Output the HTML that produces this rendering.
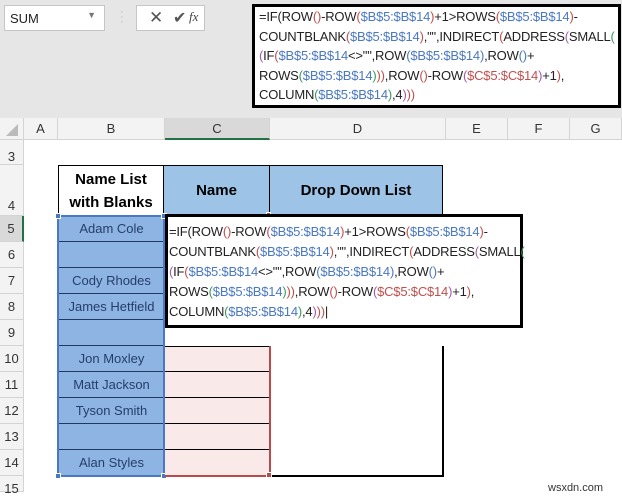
<!DOCTYPE html>
<html><head><meta charset="utf-8"><style>
*{margin:0;padding:0;box-sizing:border-box}
body{width:622px;height:492px;overflow:hidden;background:#fff;font-family:"Liberation Sans",sans-serif;position:relative}
.a{position:absolute}
.top{left:0;top:0;width:622px;height:118px;background:#e6e6e6}
.nb{left:4px;top:5px;width:101px;height:26px;background:#fff;border:1px solid #c6c6c6;font-size:13px;padding:5px 0 0 5px;color:#222}
.btn{left:136px;top:5px;width:69px;height:26px;background:#fff;border:1px solid #c6c6c6}
.fb{left:252px;top:4px;width:369px;height:104px;background:#fff;border:3px solid #000;font-size:13px;line-height:19.6px;padding:0 0 0 4px;color:#222;white-space:nowrap;letter-spacing:-0.2px;overflow:hidden}
.ed{left:165px;top:214px;width:358px;height:114px;background:#fff;border:3px solid #000;font-size:13px;line-height:20px;padding:5px 0 0 1px;color:#222;white-space:nowrap;letter-spacing:-0.2px}
.b{color:#4a78c2}.r{color:#c0504d}.p{color:#a05ca8}.g{color:#3a9a5a}
.ch{top:118px;height:22px;background:#f3f3f3;border-right:1px solid #d4d4d4;border-bottom:1px solid #d4d4d4;font-size:13px;text-align:center;line-height:22px;color:#333}
.rh{left:0;width:24px;background:#f3f3f3;border-bottom:1px solid #d4d4d4;border-right:1px solid #d4d4d4;font-size:13px;text-align:center;color:#333}
.bc{left:59px;width:105px;height:26px;background:#8eb4e3;border-bottom:1px solid #1f3864;font-size:13px;text-align:center;line-height:25px;color:#243e6c}
.cc{left:165px;width:105px;height:26px;background:#fae9e9;border-bottom:1.5px solid #000}
</style></head><body>
<div class="a top"></div>
<div class="a nb">SUM<span style="position:absolute;right:8px;top:4px;font-size:9px;color:#777">▼</span></div>
<div class="a" style="left:120px;top:10px;color:#bbb;font-size:11px;line-height:5px">·<br>·<br>·</div>
<div class="a btn"><span class="a" style="left:12px;top:2px;font-size:17px;color:#555">✕</span><span class="a" style="left:36px;top:2px;font-size:16px;color:#555">✔</span><span class="a" style="left:52px;top:3px;font-size:13px;font-style:italic;font-family:'Liberation Serif',serif;color:#444">fx</span></div>
<div class="a fb">=IF(ROW<span class="r">()</span>-ROW<span class="r">(</span><span class="b">$B$5:$B$14</span><span class="r">)</span>+1&gt;ROWS<span class="r">(</span><span class="b">$B$5:$B$14</span><span class="r">)</span>-<br>COUNTBLANK<span class="r">(</span><span class="b">$B$5:$B$14</span><span class="r">)</span>,"",INDIRECT<span class="r">(</span>ADDRESS<span class="p">(</span>SMALL<span class="g">(</span><br><span class="p">(</span>IF<span class="r">(</span><span class="b">$B$5:$B$14</span>&lt;&gt;"",ROW<span class="b">(</span><span class="b">$B$5:$B$14</span><span class="b">)</span>,ROW<span class="b">()</span>+<br>ROWS<span class="g">(</span><span class="b">$B$5:$B$14</span><span class="g">)</span><span class="r">))</span>,ROW<span class="r">()</span>-ROW<span class="p">(</span><span class="r">$C$5:$C$14</span><span class="p">)</span>+1<span class="r">)</span>,<br>COLUMN<span class="g">(</span><span class="b">$B$5:$B$14</span><span class="g">)</span>,4<span class="p">)</span><span class="r">))</span></div>
<!-- column headers -->
<div class="a ch" style="left:0;width:24px"><span class="a" style="left:6px;top:6px;width:0;height:0;border-left:12px solid transparent;border-bottom:12px solid #bbb"></span></div>
<div class="a ch" style="left:24px;width:34px">A</div>
<div class="a ch" style="left:58px;width:107px">B</div>
<div class="a ch" style="left:165px;width:105px;background:#d9d9d9;border-bottom:2px solid #217346">C</div>
<div class="a ch" style="left:270px;width:176px">D</div>
<div class="a ch" style="left:446px;width:62px">E</div>
<div class="a ch" style="left:508px;width:62px">F</div>
<div class="a ch" style="left:570px;width:52px">G</div>
<!-- row headers -->
<div class="a rh" style="top:140px;height:25px;line-height:34px">3</div>
<div class="a rh" style="top:165px;height:51px;padding-top:33px">4</div>
<div class="a rh" style="top:216px;height:26px;line-height:26px;background:#d9d9d9;border-right:2px solid #217346">5</div>
<div class="a rh" style="top:242px;height:26px;line-height:26px">6</div>
<div class="a rh" style="top:268px;height:26px;line-height:26px">7</div>
<div class="a rh" style="top:294px;height:26px;line-height:26px">8</div>
<div class="a rh" style="top:320px;height:26px;line-height:26px">9</div>
<div class="a rh" style="top:346px;height:26px;line-height:26px">10</div>
<div class="a rh" style="top:372px;height:26px;line-height:26px">11</div>
<div class="a rh" style="top:398px;height:26px;line-height:26px">12</div>
<div class="a rh" style="top:424px;height:26px;line-height:26px">13</div>
<div class="a rh" style="top:450px;height:26px;line-height:26px">14</div>
<div class="a rh" style="top:476px;height:16px;line-height:26px">15</div>
<!-- table header -->
<div class="a" style="left:58px;top:165px;width:385px;height:51px;border:1.5px solid #000;border-bottom:none;background:#9dc3e6"></div>
<div class="a" style="left:59px;top:166px;width:105px;height:50px;background:#fff;border-right:1px solid #000;font-weight:bold;font-size:15px;text-align:center;line-height:23px;padding-top:2px">Name List<br>with Blanks</div>
<div class="a" style="left:164px;top:166px;width:106px;height:50px;border-right:1px solid #000;font-weight:bold;font-size:15px;text-align:center;line-height:50px">Name</div>
<div class="a" style="left:270px;top:166px;width:172px;height:50px;font-weight:bold;font-size:15px;text-align:center;line-height:50px">Drop Down List</div>
<!-- B column -->
<div class="a bc" style="top:216px">Adam Cole</div>
<div class="a bc" style="top:242px"></div>
<div class="a bc" style="top:268px">Cody Rhodes</div>
<div class="a bc" style="top:294px">James Hetfield</div>
<div class="a bc" style="top:320px"></div>
<div class="a bc" style="top:346px">Jon Moxley</div>
<div class="a bc" style="top:372px">Matt Jackson</div>
<div class="a bc" style="top:398px">Tyson Smith</div>
<div class="a bc" style="top:424px"></div>
<div class="a bc" style="top:450px;border-bottom:none">Alan Styles</div>
<div class="a" style="left:57px;top:215px;width:108px;height:262px;border:2px solid #4a78c2"></div>
<div class="a" style="left:55px;top:213px;width:6px;height:6px;background:#4a78c2;border:1px solid #fff"></div>
<div class="a" style="left:161px;top:213px;width:6px;height:6px;background:#4a78c2;border:1px solid #fff"></div>
<div class="a" style="left:55px;top:473px;width:6px;height:6px;background:#4a78c2;border:1px solid #fff"></div>
<div class="a" style="left:161px;top:473px;width:6px;height:6px;background:#4a78c2;border:1px solid #fff"></div>
<!-- C column -->
<div class="a cc" style="top:346px;border-top:1.5px solid #000"></div>
<div class="a cc" style="top:372px"></div>
<div class="a cc" style="top:398px"></div>
<div class="a cc" style="top:424px"></div>
<div class="a cc" style="top:450px;border-bottom:none"></div>
<div class="a" style="left:269px;top:346px;width:2px;height:131px;background:#b84a4a"></div>
<div class="a" style="left:165px;top:475px;width:106px;height:2px;background:#b84a4a"></div>
<div class="a" style="left:266px;top:472px;width:6px;height:6px;background:#b84a4a;border:1px solid #fff"></div>
<div class="a" style="left:266px;top:212px;width:5px;height:5px;background:#b84a4a;border:1px solid #fff"></div>
<!-- D column borders -->
<div class="a" style="left:442px;top:346px;width:1.5px;height:131px;background:#000"></div>
<div class="a" style="left:272px;top:475px;width:171px;height:1.5px;background:#000"></div>
<!-- edit box -->
<div class="a ed">=IF(ROW<span class="r">()</span>-ROW<span class="r">(</span><span class="b">$B$5:$B$14</span><span class="r">)</span>+1&gt;ROWS<span class="r">(</span><span class="b">$B$5:$B$14</span><span class="r">)</span>-<br>COUNTBLANK<span class="r">(</span><span class="b">$B$5:$B$14</span><span class="r">)</span>,"",INDIRECT<span class="r">(</span>ADDRESS<span class="p">(</span>SMALL<span class="g">(</span><br><span class="p">(</span>IF<span class="r">(</span><span class="b">$B$5:$B$14</span>&lt;&gt;"",ROW<span class="b">(</span><span class="b">$B$5:$B$14</span><span class="b">)</span>,ROW<span class="b">()</span>+<br>ROWS<span class="g">(</span><span class="b">$B$5:$B$14</span><span class="g">)</span><span class="r">))</span>,ROW<span class="r">()</span>-ROW<span class="p">(</span><span class="r">$C$5:$C$14</span><span class="p">)</span>+1<span class="r">)</span>,<br>COLUMN<span class="g">(</span><span class="b">$B$5:$B$14</span><span class="g">)</span>,4<span class="p">)</span><span class="r">))</span>|</div>
<div class="a" style="left:548px;top:482px;font-size:11px;color:#333">wsxdn.com</div>
</body></html>
